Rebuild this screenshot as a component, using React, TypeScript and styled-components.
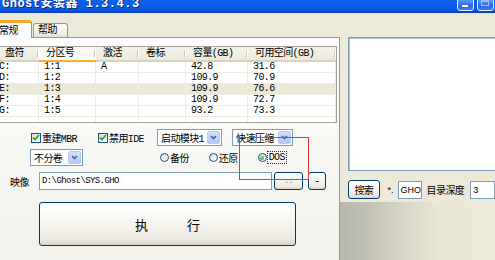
import styled, { createGlobalStyle } from "styled-components";

const GlobalStyle = createGlobalStyle`
  html, body {
    margin: 0;
    padding: 0;
    background: #ece9d8;
    overflow: hidden;
  }
  body {
    font-family: "Liberation Mono", "Noto Sans CJK SC", monospace;
    font-size: 10px;
    letter-spacing: -0.6px;
    color: #000;
  }
`;

const Screen = styled.div`
  position: relative;
  width: 495px;
  height: 260px;
  overflow: hidden;
  background: #ece9d8;
`;

const TitleBar = styled.div`
  display: flex;
  align-items: flex-start;
  height: 13px;
  overflow: hidden;
  background: linear-gradient(to bottom, #0b61ea 0%, #0a5be6 65%, #0649d0 85%, #0a3db4 100%);
`;

const TitleText = styled.div`
  margin-left: 2px;
  font-size: 12px;
  font-weight: bold;
  line-height: 9px;
  letter-spacing: 0.5px;
  color: #fff;
  text-shadow: 1px 1px 0 #0b2a8c;
  white-space: nowrap;
`;

const CaptionButtons = styled.div`
  display: flex;
  gap: 3px;
  margin-left: auto;
  margin-right: 1px;
`;

const CaptionButton = styled.div`
  display: flex;
  width: 17px;
  height: 12px;
  box-sizing: border-box;
  margin-top: -1px;
  border: 1px solid #e8eefc;
  border-radius: 0 0 3px 3px;
  background: linear-gradient(to bottom, #5a95f6 0%, #2d6ae4 60%, #3d7cf0 100%);
`;

const MinGlyph = styled.span`
  width: 6px;
  height: 2px;
  margin: 5px 0 0 4px;
  background: #fff;
`;

const MaxGlyph = styled.span`
  width: 8px;
  height: 6px;
  margin: 0 0 0 3px;
  box-sizing: border-box;
  border: 1px solid #9cbcf7;
  border-top-width: 2px;
`;

const Body = styled.div`
  display: flex;
  width: 499px;
  height: 247px;
  margin-left: -4px;
`;

const LeftPane = styled.div`
  display: flex;
  flex-direction: column;
  width: 344px;
`;

const TabStrip = styled.div`
  display: flex;
  align-items: flex-end;
  height: 24px;
`;

const Tab = styled.div<{ $active?: boolean; $w: number; $pad: number }>`
  position: relative;
  z-index: 1;
  box-sizing: border-box;
  width: ${(p) => p.$w}px;
  height: ${(p) => (p.$active ? 18 : 14)}px;
  margin-left: ${(p) => (p.$active ? -6 : 1)}px;
  margin-bottom: ${(p) => (p.$active ? -1 : 0)}px;
  padding-left: ${(p) => p.$pad}px;
  line-height: ${(p) => (p.$active ? 17 : 13)}px;
  border: 1px solid #919b9c;
  border-bottom: none;
  border-radius: 3px 3px 0 0;
  border-top: ${(p) => (p.$active ? "3px solid #f7a92a" : "1px solid #919b9c")};
  background: ${(p) =>
    p.$active ? "#fcfcfe" : "linear-gradient(to bottom, #ffffff, #f0efe8 70%, #e4e2d8)"};
  white-space: nowrap;
`;

const TabPanel = styled.div`
  flex: 1;
  display: flex;
  flex-direction: column;
  padding: 8px 2px 0 0;
  border: 1px solid #919b9c;
  border-bottom: none;
  background: linear-gradient(to bottom, #fcfcfe 0%, #f7f7f4 50%, #f2f1ec 100%);
`;

const ListView = styled.div`
  display: grid;
  grid-template-columns: 41px 57px 43px 47px 62px 1fr;
  grid-template-rows: 15px;
  grid-auto-rows: 11px;
  height: 77px;
  box-sizing: border-box;
  overflow: hidden;
  border: 1px solid #a4a296;
  background: #fff;
`;

const HeaderCell = styled.div<{ $hot?: boolean }>`
  position: relative;
  padding-left: 7px;
  line-height: 13px;
  white-space: nowrap;
  overflow: hidden;
  background: ${(p) => (p.$hot ? "#faf9f4" : "linear-gradient(to bottom, #f3f2ea, #ebeadb)")};
  border-bottom: 2px solid ${(p) => (p.$hot ? "#f8b02b" : "#d8d4c4")};

  &::after {
    content: "";
    position: absolute;
    top: 3px;
    bottom: 3px;
    right: 1px;
    width: 1px;
    background: #cbc8b6;
    box-shadow: 1px 0 0 #fff;
  }
`;

const Cell = styled.div<{ $sel?: boolean; $first?: boolean }>`
  padding-left: ${(p) => (p.$first ? 1 : 5)}px;
  line-height: 10px;
  white-space: nowrap;
  overflow: hidden;
  border-right: 1px solid #edece4;
  border-bottom: 1px solid #edece4;
  background: ${(p) => (p.$sel ? "#ece9d8" : "#fff")};
`;

const OptionsGrid = styled.div`
  display: grid;
  grid-template-columns: 67px 60px 75px 1fr;
  grid-auto-rows: 17px;
  row-gap: 3px;
  margin-top: 6px;
  padding-left: 33px;
`;

const CheckLabel = styled.label`
  display: flex;
  align-items: center;
  gap: 1px;
  margin-left: 1px;
  white-space: nowrap;
`;

const CheckBox = styled.span`
  display: flex;
  align-items: center;
  justify-content: center;
  width: 10px;
  height: 10px;
  box-sizing: border-box;
  border: 1px solid #1c5180;
  background: linear-gradient(135deg, #dcdbd5, #ffffff);
`;

const Combo = styled.div<{ $w: number }>`
  display: flex;
  align-items: center;
  width: ${(p) => p.$w}px;
  height: 17px;
  box-sizing: border-box;
  padding: 1px;
  border: 1px solid #7f9db9;
  background: #fff;
`;

const ComboText = styled.span`
  flex: 1;
  padding-left: 2px;
  white-space: nowrap;
  overflow: hidden;
`;

const ComboArrow = styled.span`
  display: flex;
  align-items: center;
  justify-content: center;
  width: 13px;
  height: 100%;
  box-sizing: border-box;
  border: 1px solid #b9cbf6;
  border-radius: 2px;
  background: linear-gradient(to bottom, #d0ddfd, #b4c8f7);
`;

const RadioGroup = styled.div`
  grid-column: 3 / span 2;
  display: flex;
  align-items: center;
  gap: 20px;
  padding-left: 3px;
`;

const RadioLabel = styled.label`
  display: flex;
  align-items: center;
  gap: 1px;
  white-space: nowrap;
`;

const RadioDot = styled.span<{ $on?: boolean }>`
  display: flex;
  align-items: center;
  justify-content: center;
  width: 9px;
  height: 9px;
  box-sizing: border-box;
  border: 1px solid #1c5180;
  border-radius: 50%;
  background: linear-gradient(135deg, #dcdbd5, #ffffff);

  &::after {
    content: "";
    display: ${(p) => (p.$on ? "block" : "none")};
    width: 4px;
    height: 4px;
    border-radius: 50%;
    background: radial-gradient(circle at 35% 35%, #7be07b, #1f9a1f);
  }
`;

const Focused = styled.span`
  outline: 1px dotted #333;
  outline-offset: 0;
  padding: 0 1px;
`;

const ImageRow = styled.div`
  display: flex;
  align-items: center;
  height: 18px;
  margin-top: 6px;
  padding-left: 13px;
`;

const FieldLabel = styled.span`
  width: 29px;
  white-space: nowrap;
`;

const TextField = styled.div<{ $w: number }>`
  display: flex;
  align-items: center;
  width: ${(p) => p.$w}px;
  height: 18px;
  box-sizing: border-box;
  padding-left: 2px;
  border: 1px solid #7f9db9;
  background: #fff;
  white-space: nowrap;
  overflow: hidden;
`;

const PathText = styled.span`
  font-size: 9px;
`;

const SmallText = styled.span`
  font-family: "Liberation Sans", Arial, sans-serif;
  font-size: 9px;
  letter-spacing: 0;
`;

const XpButton = styled.div<{ $w: number; $h: number; $gap?: number }>`
  display: flex;
  align-items: center;
  justify-content: center;
  width: ${(p) => p.$w}px;
  height: ${(p) => p.$h}px;
  margin-left: ${(p) => p.$gap ?? 0}px;
  box-sizing: border-box;
  border: 1px solid #003c74;
  border-radius: 3px;
  background: linear-gradient(to bottom, #ffffff 0%, #f6f5f0 45%, #ebe9e0 85%, #d8d4c8 100%);
  white-space: nowrap;
`;

const DimText = styled.span`
  color: #8a8a8a;
  font-size: 9px;
`;

const ExecRow = styled.div`
  margin-top: 12px;
  padding-left: 42px;
`;

const ExecText = styled.span`
  font-family: "Noto Sans CJK SC", sans-serif;
  font-size: 13px;
  letter-spacing: 0;
`;

const RightPane = styled.div`
  flex: 1;
  display: flex;
  flex-direction: column;
  overflow: hidden;
`;

const LogBox = styled.div`
  height: 134px;
  margin: 24px 0 0 8px;
  box-sizing: border-box;
  border: 1px solid #7f9db9;
  border-right: none;
  box-shadow: inset 1px 1px 0 #b3c0d3;
  background: #fff;
`;

const SearchRow = styled.div`
  display: flex;
  align-items: center;
  height: 19px;
  margin: 9px 0 0 8px;
  white-space: nowrap;
`;

const Gap = styled.span<{ $w: number }>`
  display: inline-block;
  width: ${(p) => p.$w}px;
  flex: none;
`;

const Shade = styled.div`
  flex: 1;
  margin-top: 3px;
  background: linear-gradient(to right, #b7b7ac 0%, #c3c2b6 20%, #dcd9c9 45%, #eae7d6 65%, #ece9d8 100%);
`;

const Annotation = styled.div`
  position: absolute;
  left: 239px;
  top: 137px;
  width: 70px;
  height: 43px;
  box-sizing: border-box;
  border: 1px solid #e6383f;
  pointer-events: none;
`;

const Check = () => (
  <svg width="8" height="7" viewBox="0 0 8 7">
    <path d="M1 3.5 L3 5.5 L7 1" fill="none" stroke="#21a121" strokeWidth="1.7" />
  </svg>
);

const Chevron = () => (
  <svg width="7" height="5" viewBox="0 0 7 5">
    <path d="M1 1 L3.5 3.5 L6 1" fill="none" stroke="#4d6185" strokeWidth="1.6" />
  </svg>
);

const columns = ["盘符", "分区号", "激活", "卷标", "容量(GB)", "可用空间(GB)"];

const rows = [
  ["C:", "1:1", "A", "", "42.8", "31.6"],
  ["D:", "1:2", "", "", "109.9", "70.9"],
  ["E:", "1:3", "", "", "109.9", "76.6"],
  ["F:", "1:4", "", "", "109.9", "72.7"],
  ["G:", "1:5", "", "", "93.2", "73.3"],
  ["", "", "", "", "", ""],
];

function ComboBox({ w, text }: { w: number; text: string }) {
  return (
    <Combo $w={w}>
      <ComboText>{text}</ComboText>
      <ComboArrow>
        <Chevron />
      </ComboArrow>
    </Combo>
  );
}

export default function App() {
  return (
    <Screen>
      <GlobalStyle />
      <TitleBar>
        <TitleText>Ghost安装器 1.3.4.3</TitleText>
        <CaptionButtons>
          <CaptionButton>
            <MinGlyph />
          </CaptionButton>
          <CaptionButton>
            <MaxGlyph />
          </CaptionButton>
        </CaptionButtons>
      </TitleBar>
      <Body>
        <LeftPane>
          <TabStrip>
            <Tab $active $w={42} $pad={8}>
              常规
            </Tab>
            <Tab $w={35} $pad={4}>
              帮助
            </Tab>
          </TabStrip>
          <TabPanel>
            <ListView>
              {columns.map((c) => (
                <HeaderCell key={c} $hot={c === "分区号"}>
                  {c}
                </HeaderCell>
              ))}
              {rows.map((r, i) =>
                r.map((v, j) => (
                  <Cell key={`${i}-${j}`} $sel={i === 2} $first={j === 0}>
                    {v}
                  </Cell>
                ))
              )}
            </ListView>

            <OptionsGrid>
              <CheckLabel>
                <CheckBox>
                  <Check />
                </CheckBox>
                重建MBR
              </CheckLabel>
              <CheckLabel>
                <CheckBox>
                  <Check />
                </CheckBox>
                禁用IDE
              </CheckLabel>
              <ComboBox w={65} text="启动模块1" />
              <ComboBox w={61} text="快速压缩" />

              <ComboBox w={53} text="不分卷" />
              <span />
              <RadioGroup>
                <RadioLabel>
                  <RadioDot />
                  备份
                </RadioLabel>
                <RadioLabel>
                  <RadioDot />
                  还原
                </RadioLabel>
                <RadioLabel>
                  <RadioDot $on />
                  <Focused>DOS</Focused>
                </RadioLabel>
              </RadioGroup>
            </OptionsGrid>

            <ImageRow>
              <FieldLabel>映像</FieldLabel>
              <TextField $w={233}>
                <PathText>D:\Ghost\SYS.GHO</PathText>
              </TextField>
              <XpButton $w={29} $h={18} $gap={2}>
                <DimText>..</DimText>
              </XpButton>
              <XpButton $w={18} $h={18} $gap={5}>
                -
              </XpButton>
            </ImageRow>

            <ExecRow>
              <XpButton $w={257} $h={44}>
                <ExecText>执　　　行</ExecText>
              </XpButton>
            </ExecRow>
          </TabPanel>
        </LeftPane>

        <RightPane>
          <LogBox />
          <SearchRow>
            <XpButton $w={39} $h={19}>
              搜索
            </XpButton>
            <Gap $w={8} />
            <SmallText>*.</SmallText>
            <Gap $w={4} />
            <TextField $w={29}>
              <SmallText>GHO</SmallText>
            </TextField>
            <Gap $w={5} />
            目录深度
            <Gap $w={6} />
            <TextField $w={30}>
              <SmallText>3</SmallText>
            </TextField>
          </SearchRow>
          <Shade />
        </RightPane>
      </Body>
      <Annotation />
    </Screen>
  );
}
